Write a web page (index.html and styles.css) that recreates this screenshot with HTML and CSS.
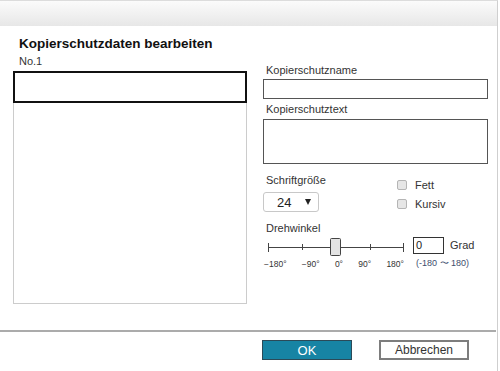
FILE: index.html
```html
<!DOCTYPE html>
<html lang="de">
<head>
    <meta charset="UTF-8">
    <title>Kopierschutzdaten bearbeiten</title>
    <link rel="stylesheet" href="styles.css">
</head>
<body>

<div class="dialog">
    <div class="titlebar"></div>

    <div class="content">
        <h2 class="title">Kopierschutzdaten bearbeiten</h2>
        <div class="columns">
            <div class="left">
                <div class="number">No.1</div>
                <div class="list">
                    <div class="list-item selected"></div>
                </div>
            </div>

            <div class="right">
                <label class="field-label">Kopierschutzname</label>
                <div class="text-input"></div>

                <label class="field-label gap-small">Kopierschutztext</label>
                <div class="text-area"></div>

                <div class="font-row">
                    <div class="font-size">
                        <label class="field-label">Schriftgröße</label>
                        <div class="select">
                            <span>24</span>
                            <span class="arrow"></span>
                        </div>
                    </div>
                    <div class="styles">
                        <div class="check"><span class="box"></span>Fett</div>
                        <div class="check"><span class="box"></span>Kursiv</div>
                    </div>
                </div>

                <label class="field-label gap-large">Drehwinkel</label>
                <div class="angle-row">
                    <div class="slider">
                        <svg width="145" height="20" viewBox="0 0 145 20">
                            <line x1="5" y1="10.5" x2="140" y2="10.5" stroke="#444" stroke-width="1"/>
                            <line x1="5.5" y1="6" x2="5.5" y2="15" stroke="#444"/>
                            <line x1="39.5" y1="7" x2="39.5" y2="13" stroke="#444"/>
                            <line x1="107.5" y1="7" x2="107.5" y2="13" stroke="#444"/>
                            <line x1="140.5" y1="6" x2="140.5" y2="15" stroke="#444"/>
                            <rect x="67.5" y="1.5" width="10" height="17" rx="1" fill="#e3e3e3" stroke="#444"/>
                        </svg>
                        <div class="scale">
                            <span>−180°</span>
                            <span>−90°</span>
                            <span>0°</span>
                            <span>90°</span>
                            <span>180°</span>
                        </div>
                    </div>
                    <div class="degree">
                        <div class="degree-line">
                            <div class="degree-input">0</div>
                            <span>Grad</span>
                        </div>
                        <div class="range">(-180 〜 180)</div>
                    </div>
                </div>
            </div>
        </div>
    </div>

    <div class="footer">
        <button class="btn btn-primary">OK</button>
        <button class="btn">Abbrechen</button>
    </div>
</div>

</body>
</html>
```

FILE: styles.css
```css
body {
    margin: 0;
    font-family: "Liberation Sans", Arial, sans-serif;
    background: #fff;
    color: #333;
}
.dialog {
    width: 498px;
    height: 371px;
    box-sizing: border-box;
    border-top: 1px solid #dcdcdc;
    border-right: 1px solid #cfcfcf;
    display: flex;
    flex-direction: column;
}
.titlebar {
    height: 25px;
    background: linear-gradient(#fbfbfb, #e7e7e7);
}
.content {
    height: 304px;
    padding-left: 13px;
}
.title {
    margin: 10px 0 0 6px;
    font-size: 13.5px;
    line-height: 16px;
    font-weight: bold;
    color: #111;
}
.columns {
    display: flex;
    margin-top: 3px;
}
.left {
    width: 234px;
}
.number {
    margin-left: 6px;
    font-size: 11px;
    line-height: 13px;
    color: #333;
}
.list {
    margin-top: 3px;
    width: 234px;
    height: 233px;
    box-sizing: border-box;
    border: 1px solid #cccccc;
}
.list-item.selected {
    margin: -1px -1px 0 -1px;
    height: 32px;
    box-sizing: border-box;
    border: 2px solid #111;
}
.right {
    margin-left: 16px;
    width: 225px;
    padding-top: 9px;
}
.field-label {
    display: block;
    padding-left: 3px;
    font-size: 11px;
    line-height: 13px;
    color: #333;
}
.gap-small {
    margin-top: 4px;
}
.gap-large {
    margin-top: 10px;
}
.text-input {
    margin-top: 2px;
    height: 20px;
    box-sizing: border-box;
    border: 1px solid #555;
}
.text-area {
    margin-top: 3px;
    height: 45px;
    box-sizing: border-box;
    border: 1px solid #555;
}
.font-row {
    display: flex;
    margin-top: 10px;
}
.font-size {
    width: 134px;
}
.select {
    margin-top: 5px;
    width: 56px;
    height: 20px;
    box-sizing: border-box;
    border: 1px solid #c8c8c8;
    border-radius: 3px;
    display: flex;
    align-items: center;
    padding: 0 7px 0 13px;
    font-size: 13px;
    color: #222;
}
.arrow {
    margin-left: auto;
    width: 0;
    height: 0;
    border-left: 3px solid transparent;
    border-right: 3px solid transparent;
    border-top: 6px solid #222;
}
.styles {
    padding-top: 4px;
    display: flex;
    flex-direction: column;
    gap: 6px;
}
.check {
    display: flex;
    align-items: center;
    height: 13px;
    font-size: 11px;
    color: #333;
}
.box {
    width: 8px;
    height: 8px;
    margin-right: 8px;
    border: 1px solid #b5b5b5;
    border-radius: 2px;
    background: #e6e6e6;
}
.angle-row {
    display: flex;
    margin-top: 2px;
}
.slider {
    width: 145px;
}
.slider svg {
    display: block;
}
.scale {
    display: flex;
    justify-content: space-between;
    width: 140px;
    margin-top: 2px;
    padding-left: 1px;
    font-size: 8.5px;
    line-height: 11px;
    color: #333;
}
.degree {
    margin-left: 5px;
}
.degree-line {
    display: flex;
    align-items: center;
}
.degree-input {
    width: 31px;
    height: 17px;
    box-sizing: border-box;
    border: 1px solid #333;
    padding-left: 2px;
    font-size: 11px;
    line-height: 15px;
    color: #222;
}
.degree-line span {
    margin-left: 6px;
    margin-top: -2px;
    font-size: 11px;
}
.range {
    margin-top: 4px;
    padding-left: 3px;
    font-size: 9px;
    line-height: 11px;
    color: #3e4d6e;
}
.footer {
    border-top: 2px solid #ababab;
    margin-right: 1px;
    padding: 8px 0 0 262px;
    display: flex;
    gap: 27px;
}
.btn {
    width: 90px;
    height: 20px;
    box-sizing: border-box;
    padding: 0;
    font-family: "Liberation Sans", Arial, sans-serif;
    font-size: 12px;
    color: #333;
    background: #fff;
    border: 2px solid #7d7d7d;
}
.btn-primary {
    background: #1784a4;
    border: 1px solid #2b4a58;
    color: #fff;
    font-size: 13px;
}
```
